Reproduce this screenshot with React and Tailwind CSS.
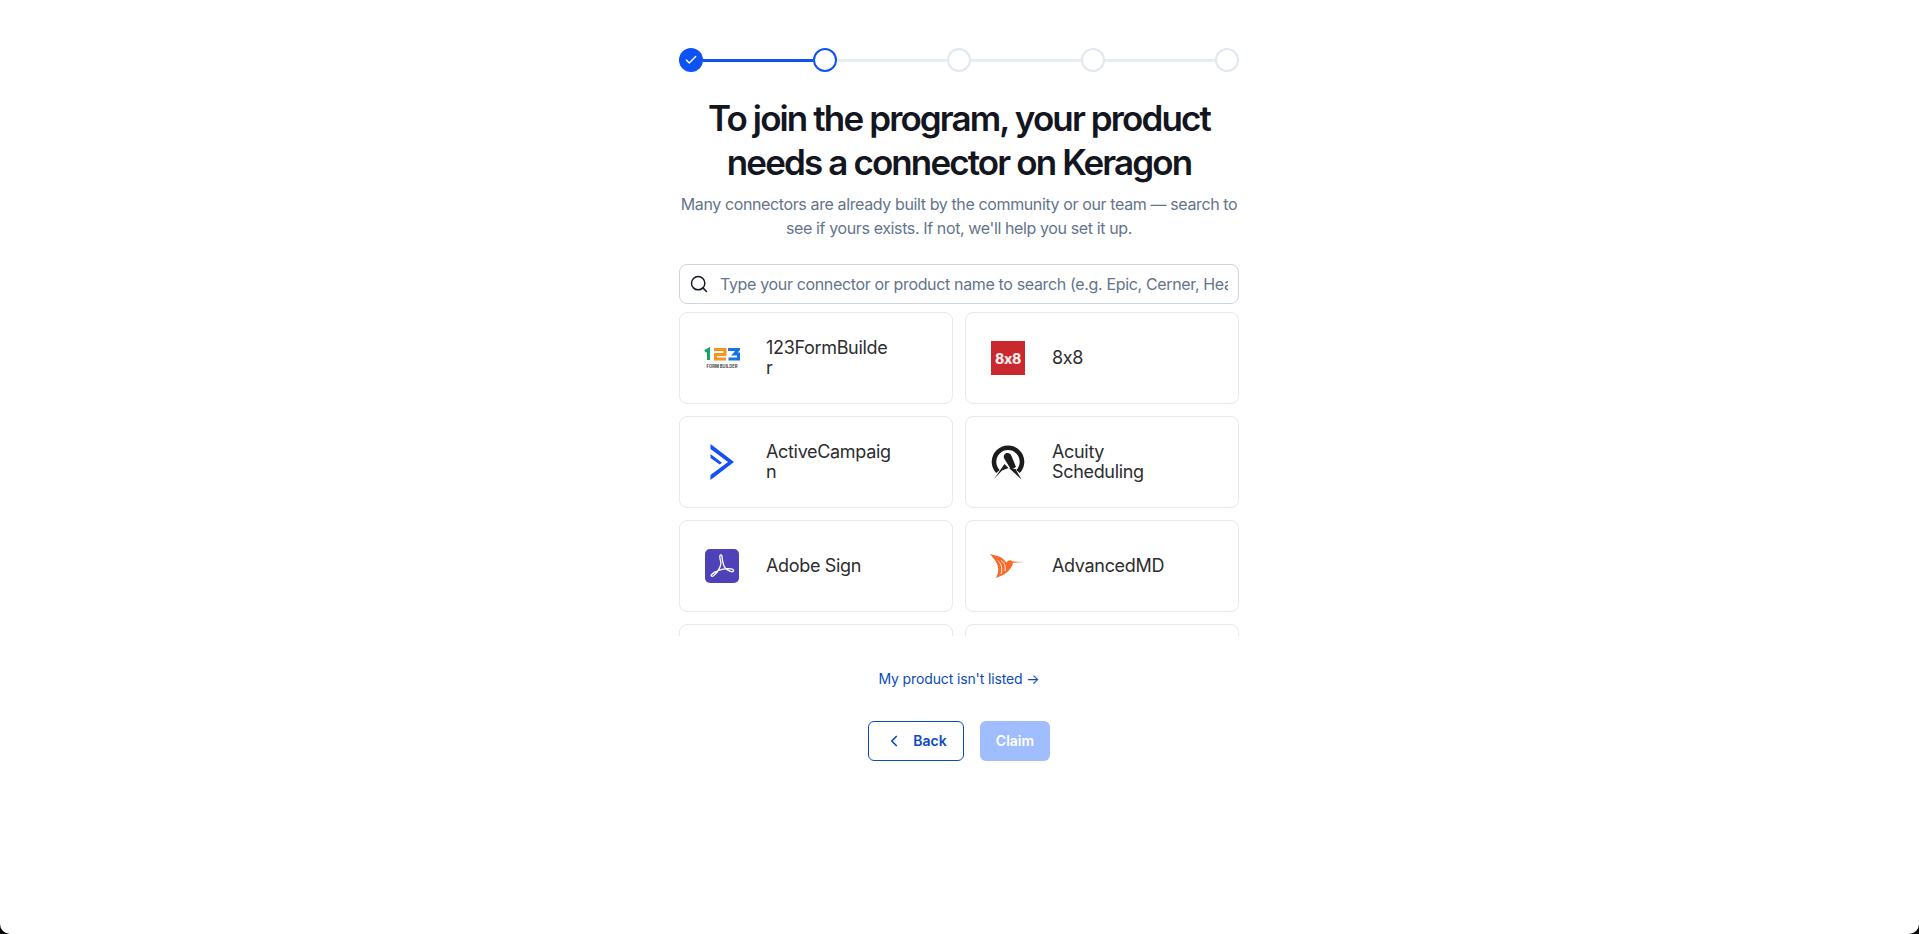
import { Check, ChevronLeft, Search } from 'lucide-react';

const Logo123 = () => (
  <svg width="36" height="22" viewBox="0 0 36 22">
    <g fill="none" strokeWidth="3">
      <path d="M1 4.500 4.500 2.500V13" stroke="#12a56b" />
      <path d="M10 2.500H21V7.500H11.500V12H22" stroke="#f7931e" />
      <path d="M24 2.500H34.500L30.500 7H34.500V12H24.500" stroke="#1473e6" />
    </g>
    <text x="18" y="20.500" textAnchor="middle" fontSize="4.200" fontWeight="700" fill="#444" fontFamily="Inter, sans-serif">
      FORM BUILDER
    </text>
  </svg>
);

const Logo8x8 = () => (
  <div className="flex h-[34px] w-[34px] items-center justify-center bg-[#c9282f] text-[14px] font-extrabold tracking-[-0.3px] text-[#fbe9ea] [font-feature-settings:'calt'_0]">
    8x8
  </div>
);

const LogoActive = () => (
  <svg width="36" height="36" viewBox="0 0 36 36">
    <path d="M6.500 0 30 18 6.500 36V31L24 18 6.500 5Z" fill="#1550f5" />
    <path d="M6.500 10 18 18.700 15.700 20.500 6.500 14Z" fill="#1550f5" />
  </svg>
);

const LogoAcuity = () => (
  <svg width="36" height="36" viewBox="0 0 36 36">
    <path d="M8 27.500A14 14 0 1 1 28 27.500" fill="none" stroke="#1c1c1c" strokeWidth="4.600" />
    <path d="M14.500 10.500C16.500 8 20.500 9 21.500 12L26 23 21 25.500 14.500 15C13.500 13.500 13.500 11.500 14.500 10.500Z" fill="#1c1c1c" />
    <path d="M4 35 14.500 20 18.500 24 12 26.500 4 35ZM19 24 25.500 25 31.500 35.500 19 24Z" fill="#1c1c1c" />
  </svg>
);

const LogoAdobe = () => (
  <div className="flex h-[34px] w-[34px] items-center justify-center rounded-[5px] bg-[#4f42b9]">
    <svg width="26" height="26" viewBox="2 2 20 20" fill="none" stroke="#fff" strokeWidth="1" strokeLinejoin="round">
      <path d="M11 3.500C10 3.500 10.200 6 11 8.500C11.800 11 9 17 5.500 19.500C4 20.500 3 19.500 4 18.500C6 16.500 11.500 14.500 16 14C19 13.700 21.500 14.800 20.800 16C20 17.200 16.500 15.500 14.500 13.500C12.500 11.500 12 5 12 4.500C12 4 11.700 3.500 11 3.500Z" />
    </svg>
  </div>
);

const LogoAdvanced = () => (
  <svg width="36" height="26" viewBox="0 0 36 26">
    <path d="M0 1 9 3.500C13 5 15 8 16.500 9.500C17.500 8 19 7 21 7.500L23 8.500 35 9 23 9.800C22 14 19 19 13 22L6 25 7.500 21C9 17 8 12 6 9C4 6 2 3 0 1Z" fill="#f8692a" />
    <path d="M7.500 7.500C11 10 13 15 11 21M11 7.500C14.500 10 16 13 15 18" fill="none" stroke="#fff" strokeWidth="0.900" />
  </svg>
);

const connectors = [
  { name: '123FormBuilder', logo: <Logo123 /> },
  { name: '8x8', logo: <Logo8x8 /> },
  { name: 'ActiveCampaign', logo: <LogoActive /> },
  { name: 'Acuity Scheduling', logo: <LogoAcuity /> },
  { name: 'Adobe Sign', logo: <LogoAdobe /> },
  { name: 'AdvancedMD', logo: <LogoAdvanced /> },
  { name: '', logo: null },
  { name: '', logo: null },
];

function Stepper() {
  return (
    <div className="flex items-center">
      <div className="flex h-6 w-6 items-center justify-center rounded-full bg-[#0d52f5] text-white">
        <Check size={14} strokeWidth={2.5} />
      </div>
      <div className="h-[3px] flex-1 bg-[#0d52f5]" />
      <div className="h-6 w-6 rounded-full border-2 border-[#0d52f5]" />
      <div className="h-[3px] flex-1 bg-[#e8edf5]" />
      <div className="h-6 w-6 rounded-full border-2 border-[#e2e8f0]" />
      <div className="h-[3px] flex-1 bg-[#e8edf5]" />
      <div className="h-6 w-6 rounded-full border-2 border-[#e2e8f0]" />
      <div className="h-[3px] flex-1 bg-[#e8edf5]" />
      <div className="h-6 w-6 rounded-full border-2 border-[#e2e8f0]" />
    </div>
  );
}

export default function App() {
  return (
    <div className="h-screen overflow-hidden bg-black font-['Inter',sans-serif]">
      <div className="flex h-full justify-center rounded-b-[10px] bg-white pt-12 pr-px">
        <div className="w-[560px]">
          <Stepper />
          <h1 className="mt-6 text-center text-[35px] leading-[44px] font-semibold tracking-[-1.88px] text-[#14161f]">
            To join the program, your product
            <br />
            needs a connector on Keragon
          </h1>
          <p className="mt-2 text-center text-base leading-6 tracking-[-0.38px] text-[#64748b]">
            Many connectors are already built by the community or our team — search to see if yours exists. If not, we'll help you set it up.
          </p>
          <div className="mt-6 flex h-10 items-center rounded-lg border border-[#cbd5e1] pr-2.5 pl-[9px]">
            <Search size={20} strokeWidth={1.75} className="shrink-0 text-[#14161f]" />
            <input
              className="ml-[11px] min-w-0 flex-1 text-base tracking-[-0.35px] outline-none placeholder:text-[#64748b]"
              placeholder="Type your connector or product name to search (e.g. Epic, Cerner, Healthie)"
            />
          </div>
          <div className="mt-2 grid h-[324px] grid-cols-2 gap-3 overflow-hidden">
            {connectors.map((c, i) => (
              <div key={i} className="flex h-[92px] items-center rounded-lg border border-[#e9e9ec] pl-[23px]">
                <div className="flex w-[38px] shrink-0 items-center justify-center">{c.logo}</div>
                <div className="ml-[25px] w-[126px] text-lg leading-5 tracking-[-0.33px] break-words text-[#2d2d2f] [font-feature-settings:'calt'_0]">
                  {c.name}
                </div>
              </div>
            ))}
          </div>
          <div className="mt-[33px] text-center text-sm leading-5 tracking-[-0.13px] text-[#0b4bc0]">My product isn't listed →</div>
          <div className="mt-8 flex justify-center gap-4">
            <button className="flex h-10 w-24 items-center justify-center gap-[10px] rounded-md border border-[#0b4bc0] text-sm font-semibold text-[#0b4bc0]">
              <ChevronLeft size={18} strokeWidth={2.25} />
              Back
            </button>
            <button className="h-10 w-[70px] rounded-md bg-[#a0bdff] text-sm font-semibold text-white">Claim</button>
          </div>
        </div>
      </div>
    </div>
  );
}
